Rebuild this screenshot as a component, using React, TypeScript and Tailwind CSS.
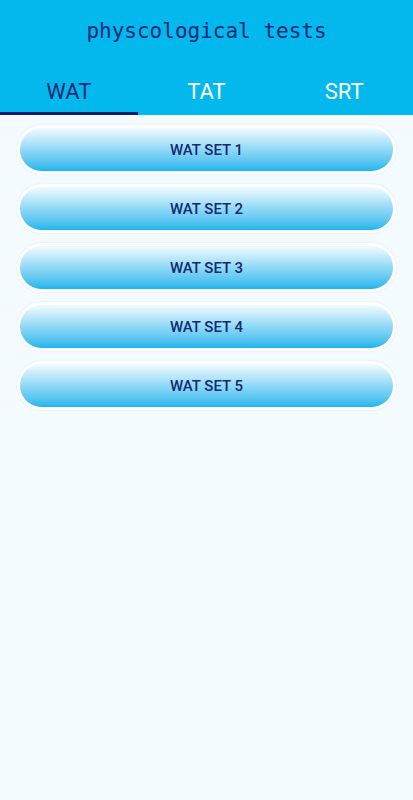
import React, { useState } from 'react';

const TABS = ['WAT', 'TAT', 'SRT'];

const App: React.FC = () => {
  const [tab, setTab] = useState('WAT');
  const sets = [1, 2, 3, 4, 5];

  return (
    <div className="min-h-[800px] w-full bg-[#f3fbff] font-['Roboto',sans-serif]">
      <header className="bg-[#03b8ec]">
        <h1 className="h-[64px] flex items-center justify-center text-[21px] font-medium text-[#142a75] font-['DejaVu_Sans_Mono','Liberation_Mono',monospace]">
          physcological tests
        </h1>
        <nav className="flex h-[51px]">
          {TABS.map((t) => (
            <button
              key={t}
              onClick={() => setTab(t)}
              className={
                t === tab
                  ? 'flex-1 flex items-center justify-center pt-[6px] text-[22px] text-[#142a75] border-b-[3px] border-[#0e1f6b]'
                  : 'flex-1 flex items-center justify-center pt-[6px] text-[22px] text-white border-b-[3px] border-transparent'
              }
            >
              {t}
            </button>
          ))}
        </nav>
      </header>

      <main className="flex flex-col gap-[10px] px-[17px] pt-[10px]">
        {sets.map((n) => (
          <div key={n} className="rounded-full bg-white p-[3px] shadow-[0_0_2px_rgba(160,200,220,0.4)]">
            <button className="w-full h-[43px] pt-[1px] rounded-full bg-gradient-to-b from-[#f2fbff] via-[#8fd9f6] to-[#14b6ec] text-[15px] font-medium text-[#142a75]">
              {tab} SET {n}
            </button>
          </div>
        ))}
      </main>
    </div>
  );
};

export default App;
